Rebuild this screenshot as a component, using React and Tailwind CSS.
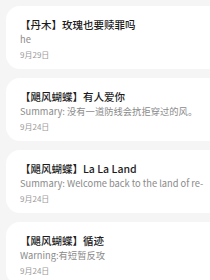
import React from "react";

const items = [
  { title: "【丹木】玫瑰也要赎罪吗", sub: "he", date: "9月29日" },
  { title: "【飓风蝴蝶】有人爱你", sub: "Summary: 没有一道防线会抗拒穿过的风。", date: "9月24日" },
  { title: "【飓风蝴蝶】La La Land", sub: "Summary: Welcome back to the land of re-", date: "9月24日" },
  { title: "【飓风蝴蝶】循迹", sub: "Warning:有短暂反攻", date: "9月24日" },
];

export default function App() {
  return (
    <div
      className="w-[210px] h-[280px] overflow-hidden bg-[#f5f5f5] pt-[6px] flex flex-col gap-[9px]"
      style={{ fontFamily: '"Noto Sans CJK SC", "Noto Sans", sans-serif' }}
    >
      {items.map((it, i) => (
        <div
          key={i}
          className="ml-[6px] h-[63px] shrink-0 bg-white rounded-l-[14px] pl-[14px] pt-[12px] flex flex-col overflow-hidden"
        >
          <div className="text-[10.5px] leading-[14px] font-medium text-[#1c1c1c] whitespace-nowrap">{it.title}</div>
          <div className="text-[9.3px] leading-[12px] mt-[1px] text-[#8a8a8a] whitespace-nowrap">{it.sub}</div>
          <div className="text-[8px] leading-[11px] mt-[3.5px] text-[#9a9a9a] whitespace-nowrap">{it.date}</div>
        </div>
      ))}
    </div>
  );
}
